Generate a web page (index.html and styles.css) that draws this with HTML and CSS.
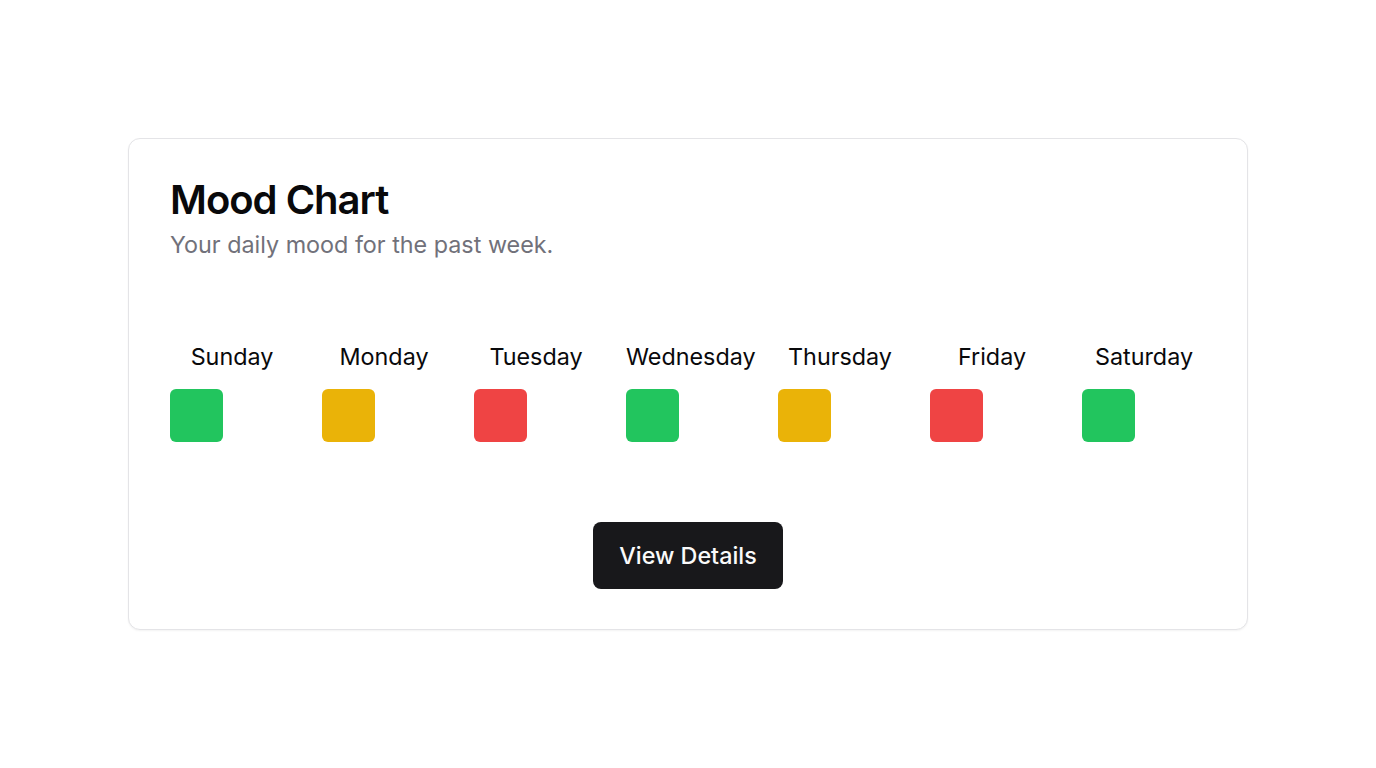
FILE: index.html
```html
<!DOCTYPE html>
<html lang="en">
<head>
<meta charset="utf-8">
<title>Mood Chart</title>
<link rel="stylesheet" href="styles.css">
</head>
<body>
<main class="page">
  <section class="card">
    <header class="card-header">
      <h1 class="title">Mood Chart</h1>
      <p class="subtitle">Your daily mood for the past week.</p>
    </header>
    <div class="week">
      <div class="day"><span class="day-name">Sunday</span><span class="mood mood-good"></span></div>
      <div class="day"><span class="day-name">Monday</span><span class="mood mood-ok"></span></div>
      <div class="day"><span class="day-name">Tuesday</span><span class="mood mood-bad"></span></div>
      <div class="day"><span class="day-name">Wednesday</span><span class="mood mood-good"></span></div>
      <div class="day"><span class="day-name">Thursday</span><span class="mood mood-ok"></span></div>
      <div class="day"><span class="day-name">Friday</span><span class="mood mood-bad"></span></div>
      <div class="day"><span class="day-name">Saturday</span><span class="mood mood-good"></span></div>
    </div>
    <div class="actions">
      <button class="btn" type="button">View Details</button>
    </div>
  </section>
</main>
</body>
</html>
```
FILE: styles.css
```css
* { box-sizing: border-box; }
html, body { margin: 0; padding: 0; }
body {
  background: #ffffff;
  font-family: Inter, "Noto Sans", sans-serif;
  color: #09090b;
}
.page {
  min-height: 100vh;
  display: flex;
  align-items: center;
  justify-content: center;
}
.card {
  width: 1120px;
  height: 492px;
  border: 1px solid #e4e4e7;
  border-radius: 12px;
  background: #fff;
  box-shadow: 0 1px 2px rgba(0,0,0,0.05);
  padding: 41px 41px 40px;
  display: flex;
  flex-direction: column;
}
.card-header { display: flex; flex-direction: column; }
.title {
  margin: 0;
  font-size: 40px;
  line-height: 40px;
  font-weight: 600;
  letter-spacing: -0.025em;
}
.subtitle {
  margin: 9px 0 0;
  font-size: 23.33px;
  line-height: 32px;
  color: #71717a;
}
.week {
  margin-top: 80px;
  display: grid;
  grid-template-columns: repeat(7, minmax(0, 1fr));
  column-gap: 28px;
}
.day {
  display: flex;
  flex-direction: column;
  gap: 16px;
  min-width: 0;
}
.day-name {
  text-align: center;
  font-size: 23.33px;
  line-height: 32px;
  color: #09090b;
  white-space: nowrap;
}
.mood {
  width: 53px;
  height: 53px;
  border-radius: 6px;
}
.mood-good { background: #22c55e; }
.mood-ok { background: #eab308; }
.mood-bad { background: #ef4444; }
.actions {
  margin-top: auto;
  display: flex;
  justify-content: center;
}
.btn {
  height: 67px;
  padding: 0 26.5px;
  border: none;
  border-radius: 8px;
  background: #18181b;
  color: #fafafa;
  font-family: inherit;
  font-size: 23.33px;
  font-weight: 500;
}
```
